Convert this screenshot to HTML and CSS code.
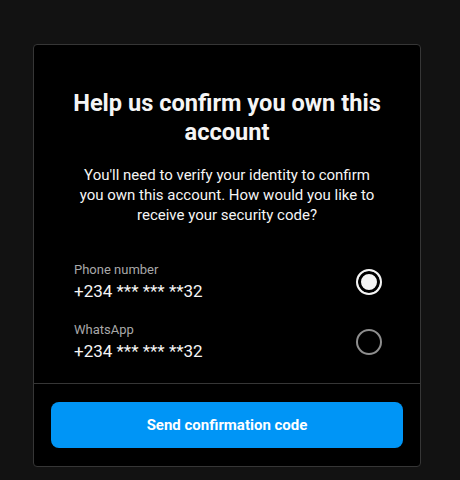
FILE: index.html
```html
<!DOCTYPE html>
<html lang="en">
<head>
  <meta charset="UTF-8">
  <title>Confirm your account</title>
  <meta name="viewport" content="width=device-width, initial-scale=1.0">
  <link rel="stylesheet" href="styles.css">
</head>
<body>
  <div class="confirm-card">
    <div class="confirm-body">
      <h2 class="confirm-title">Help us confirm you own this account</h2>
      <p class="confirm-text">You'll need to verify your identity to confirm you own this account. How would you like to receive your security code?</p>

      <div class="confirm-options">
        <label class="confirm-option">
          <span class="confirm-option-info">
            <span class="confirm-option-label">Phone number</span>
            <span class="confirm-option-value">+234 *** *** **32</span>
          </span>
          <input class="confirm-radio" type="radio" name="method" value="sms" checked>
        </label>
        <label class="confirm-option">
          <span class="confirm-option-info">
            <span class="confirm-option-label">WhatsApp</span>
            <span class="confirm-option-value">+234 *** *** **32</span>
          </span>
          <input class="confirm-radio" type="radio" name="method" value="whatsapp">
        </label>
      </div>
    </div>

    <div class="confirm-footer">
      <button class="confirm-button" type="button">Send confirmation code</button>
    </div>
  </div>
</body>
</html>
```

FILE: styles.css
```css
body {
  font-family: Roboto, 'Liberation Sans', sans-serif;
  background: #121212;
  color: #f5f5f5;
  margin: 0;
  padding: 44px 0 0 33px;
}
.confirm-card {
  width: 388px;
  box-sizing: border-box;
  background: #000;
  border: 1px solid #363636;
  border-radius: 4px;
}
.confirm-body {
  padding: 44px 40px 21px;
}
.confirm-title {
  margin: 0 -12px;
  font-size: 23.6px;
  line-height: 29px;
  font-weight: bold;
  text-align: center;
  color: #f5f5f5;
}
.confirm-text {
  margin: 18px 0 0;
  font-size: 15px;
  line-height: 20px;
  text-align: center;
}
.confirm-options {
  margin-top: 37px;
  display: flex;
  flex-direction: column;
  gap: 20px;
}
.confirm-option {
  display: flex;
  align-items: center;
  justify-content: space-between;
  cursor: pointer;
}
.confirm-option-info {
  display: flex;
  flex-direction: column;
}
.confirm-option-label {
  font-size: 13px;
  line-height: 16px;
  color: #a8a8a8;
}
.confirm-option-value {
  font-size: 17px;
  line-height: 22px;
  margin-top: 2px;
  color: #f5f5f5;
}
.confirm-radio {
  appearance: none;
  -webkit-appearance: none;
  margin: 0 -2px 0 0;
  width: 26px;
  height: 26px;
  border: 2px solid #8e8e8e;
  border-radius: 50%;
  box-sizing: border-box;
  background: #000;
  cursor: pointer;
}
.confirm-radio:checked {
  border-color: #f5f5f5;
  background: #f5f5f5;
  box-shadow: inset 0 0 0 3px #000;
}
.confirm-footer {
  border-top: 1px solid #363636;
  padding: 18px 17px 18px;
}
.confirm-button {
  width: 100%;
  height: 46px;
  border: none;
  border-radius: 8px;
  background: #0095f6;
  color: #fff;
  font-family: inherit;
  font-size: 15px;
  font-weight: bold;
  cursor: pointer;
}
```
